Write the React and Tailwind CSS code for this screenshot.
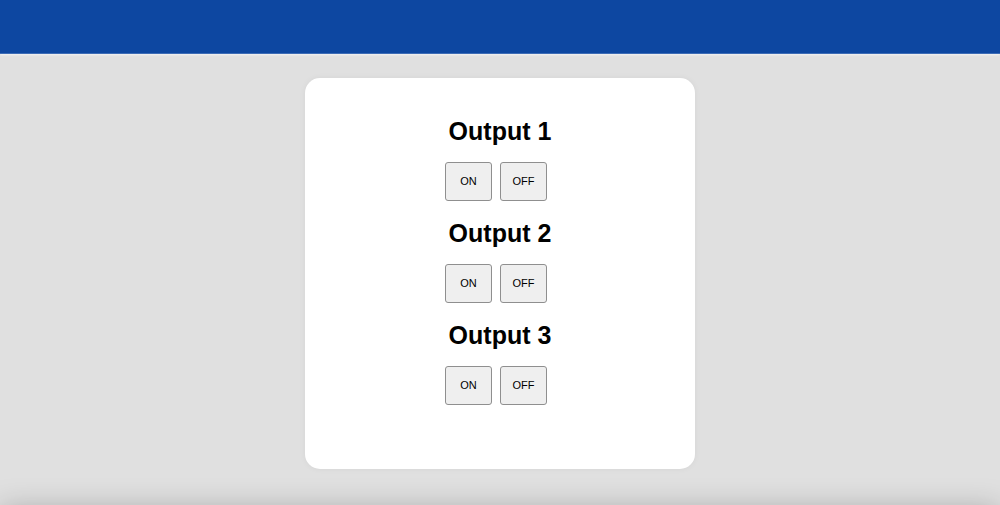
import React from 'react';

const outputs = [1, 2, 3];

const OutputControl = ({ n }) => (
  <div className="flex flex-col items-center">
    <h2 className="text-[25px] leading-[28px] font-bold text-black">Output {n}</h2>
    <div className="flex gap-2 mt-[17px] pr-2">
      <button className="w-[47px] h-[39px] bg-[#efefef] border border-[#8f8f8f] rounded-[3px] text-[11px] text-black">
        ON
      </button>
      <button className="w-[47px] h-[39px] bg-[#efefef] border border-[#8f8f8f] rounded-[3px] text-[11px] text-black">
        OFF
      </button>
    </div>
  </div>
);

export default function App() {
  return (
    <div
      className="min-h-screen bg-[#e0e0e0]"
      style={{ fontFamily: '"Liberation Sans", Arial, sans-serif' }}
    >
      <header className="h-[54px] bg-[#0d47a1] border-b border-[#3d6cb6] shadow-[0_1px_2px_rgba(255,255,255,0.6)]"></header>
      <main className="flex justify-center pt-[24px]">
        <section className="w-[390px] h-[391px] bg-white rounded-[15px] shadow-[0_0_6px_rgba(0,0,0,0.05)] pt-[39px] flex flex-col gap-[18px]">
          {outputs.map(n => <OutputControl key={n} n={n} />)}
        </section>
      </main>
      <footer className="mt-[40px] h-[80px] bg-[#e0e0e0] shadow-[0_0_30px_rgba(0,0,0,0.25)]"></footer>
    </div>
  );
}
